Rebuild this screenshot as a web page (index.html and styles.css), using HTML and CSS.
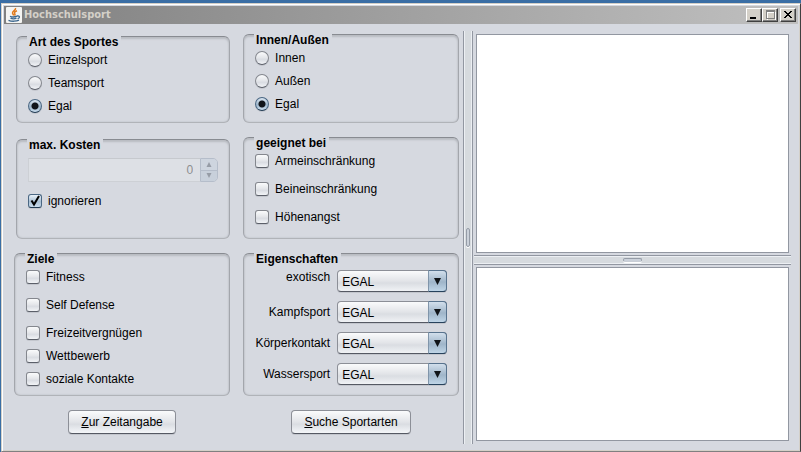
FILE: index.html
```html
<!DOCTYPE html>
<html lang="de">
<head>
<meta charset="utf-8">
<title>Hochschulsport</title>
<link rel="stylesheet" href="styles.css">
</head>
<body>
<div class="window">
  <header class="titlebar">
    <svg class="app-icon" viewBox="0 0 16 16" aria-hidden="true">
      <rect width="16" height="16" rx="1" fill="#f4f4f2"/>
      <path d="M9.500 1c1 2-3.500 3-3 5 .1.900 1 1.500 1.200 2.500M11 3.800c-2 .7-3 1.700-2.200 2.900.5.700.2 1.300-.3 1.800" fill="none" stroke="#e07a1c" stroke-width="1.500"/>
      <path d="M4 9.200c1.500.8 5 .8 7 0M4.500 11.200c1.500.7 4.500.7 6 0M2.500 13.300c3 1.300 8 1.200 10.500-.1M11 9c3-.6 3.300 1.800.6 2.700" fill="none" stroke="#3a668e" stroke-width="1.300"/>
    </svg>
    <h1 class="titlebar-text">Hochschulsport</h1>
    <div class="window-buttons">
      <button class="window-button" type="button" aria-label="Minimieren"><svg viewBox="0 0 12 10" shape-rendering="crispEdges"><path d="M2 7h6v2H2z" fill="#000"/></svg></button>
      <button class="window-button" type="button" aria-label="Maximieren" disabled><svg viewBox="0 0 12 10" shape-rendering="crispEdges"><path d="M3 2h8v8H3z" fill="none" stroke="#fff"/><path d="M2 0h9v2H2zM2 2h1v7H2zM10 2h1v7h-1zM2 8h9v1H2z" fill="#808080"/></svg></button>
      <button class="window-button window-button-close" type="button" aria-label="Schließen"><svg viewBox="0 0 12 10" shape-rendering="crispEdges"><path d="M2 1h2v1h1v1h2V2h1V1h2v1H9v1H8v1H7v1h1v1h1v1h1v1H8V7H7V6H5v1H4v1H2V7h1V6h1V5h1V4H4V3H3V2H2z" fill="#000"/></svg></button>
    </div>
  </header>

  <main class="content">
    <form class="filters">
      <fieldset class="group group-inset">
        <legend>Art des Sportes</legend>
        <div class="rows">
          <label class="choice"><input type="radio" name="art">Einzelsport</label>
          <label class="choice"><input type="radio" name="art">Teamsport</label>
          <label class="choice"><input type="radio" name="art" checked>Egal</label>
        </div>
      </fieldset>
      <fieldset class="group">
        <legend>Innen/Außen</legend>
        <div class="rows">
          <label class="choice"><input type="radio" name="ort">Innen</label>
          <label class="choice"><input type="radio" name="ort">Außen</label>
          <label class="choice"><input type="radio" name="ort" checked>Egal</label>
        </div>
      </fieldset>
      <fieldset class="group group-inset">
        <legend>max. Kosten</legend>
        <div class="rows cost">
          <div class="spinner">
            <input class="spinner-value" type="text" value="0" aria-label="max. Kosten" disabled>
            <div class="spinner-buttons">
              <button type="button" aria-label="Mehr" disabled><svg viewBox="0 0 6 5"><path d="M3 0l2.500 5h-5z"/></svg></button>
              <button type="button" aria-label="Weniger" disabled><svg viewBox="0 0 6 5"><path d="M3 5l2.500-5h-5z"/></svg></button>
            </div>
          </div>
          <label class="choice"><input type="checkbox" checked>ignorieren</label>
        </div>
      </fieldset>
      <fieldset class="group">
        <legend>geeignet bei</legend>
        <div class="rows">
          <label class="choice choice-spaced"><input type="checkbox">Armeinschränkung</label>
          <label class="choice choice-spaced"><input type="checkbox">Beineinschränkung</label>
          <label class="choice"><input type="checkbox">Höhenangst</label>
        </div>
      </fieldset>
      <fieldset class="group">
        <legend>Ziele</legend>
        <div class="rows">
          <label class="choice choice-spaced"><input type="checkbox">Fitness</label>
          <label class="choice choice-spaced"><input type="checkbox">Self Defense</label>
          <label class="choice"><input type="checkbox">Freizeitvergnügen</label>
          <label class="choice"><input type="checkbox">Wettbewerb</label>
          <label class="choice"><input type="checkbox">soziale Kontakte</label>
        </div>
      </fieldset>
      <fieldset class="group">
        <legend>Eigenschaften</legend>
        <div class="rows properties">
          <label class="label-top" for="exotisch">exotisch</label>
          <span class="combo"><select id="exotisch"><option>EGAL</option></select></span>
          <label for="kampf">Kampfsport</label>
          <span class="combo"><select id="kampf"><option>EGAL</option></select></span>
          <label for="koerper">Körperkontakt</label>
          <span class="combo"><select id="koerper"><option>EGAL</option></select></span>
          <label for="wasser">Wassersport</label>
          <span class="combo"><select id="wasser"><option>EGAL</option></select></span>
        </div>
      </fieldset>
      <button class="action" type="button"><u>Z</u>ur Zeitangabe</button>
      <button class="action" type="button"><u>S</u>uche Sportarten</button>
    </form>

    <div class="divider divider-vertical" role="separator" aria-orientation="vertical"><span class="grip"></span></div>

    <section class="results">
      <textarea class="result result-main" aria-label="Sportarten" readonly></textarea>
      <div class="divider divider-horizontal" role="separator"><span class="grip"></span></div>
      <textarea class="result result-detail" aria-label="Details" readonly></textarea>
    </section>
  </main>
</div>
</body>
</html>
```

FILE: styles.css
```css
* { box-sizing: border-box; }

body {
  margin: 0;
  min-height: 100vh;
  display: flex;
  padding: 3px 0 0 1px;
  background: #3a6ea5;
  color: #000;
  font: 12px/14px "Liberation Sans", Arial, sans-serif;
}

button, input, select, textarea { margin: 0; font: inherit; color: inherit; }

.window {
  flex: 1;
  display: flex;
  flex-direction: column;
  background: #d6d9e0;
  border: 1px solid #d4d0c8;
  border-right-color: #404040;
  border-bottom-color: #808080;
  box-shadow: inset 1px 1px #fff, inset -1px -1px #d4d0c8;
  padding: 2px 2px 1px;
}

/* Title bar */
.titlebar {
  display: flex;
  align-items: center;
  height: 18px;
  padding: 0 2px;
  background: linear-gradient(90deg, #808080, #c0c0c0);
}
.app-icon { width: 16px; height: 16px; }
.titlebar-text {
  margin: 0 auto 0 2px;
  color: #d4d0c8;
  font: bold 11px/16px "DejaVu Sans Condensed", "DejaVu Sans", sans-serif;
}
.window-buttons { display: flex; }
.window-button {
  display: flex;
  width: 16px;
  height: 14px;
  padding: 1px;
  border: 1px solid;
  border-color: #fff #404040 #404040 #fff;
  background: #d4d0c8;
  box-shadow: inset -1px -1px #808080;
}
.window-button svg { width: 12px; height: 10px; }
.window-button-close { margin-left: 2px; }

/* Main area */
.content { flex: 1; display: flex; }

.filters {
  flex: 458;
  display: grid;
  grid-template-columns: repeat(2, minmax(0, 1fr));
  grid-template-rows: 89px 102px 143px 24px;
  gap: 14px 13px;
  align-content: start;
  padding: 10px 4px 0 10px;
}

.group {
  min-width: 0;
  margin: 0;
  padding: 0 11px;
  border: 1px solid #a3a6ac;
  border-top-color: #888b91;
  border-bottom-color: #b0b3b8;
  border-radius: 6px;
  box-shadow: inset 0 2px 2px #b9bcc2, inset 0 0 2px #b4b7bd;
}
.group-inset { margin: 2px 0 0 2px; }
.group legend {
  float: left;
  margin: -1px 0 0 -1px;
  padding: 0 3px 0 2px;
  background: #d6d9e0;
  font-weight: bold;
  line-height: 12px;
}
.rows { clear: both; display: flex; flex-direction: column; }

.choice { display: flex; align-items: center; gap: 6px; height: 23px; }
.choice-spaced { margin-bottom: 5px; }
.choice input {
  appearance: none;
  width: 14px;
  height: 14px;
  border: 1px solid #84878e;
  border-bottom-color: #5b5f69;
  border-radius: 3px;
  background: linear-gradient(#fafbfc, #e3e5e9 50%, #d9dce2 60%, #f2f4f7);
  box-shadow: 0 1px #c3c6cd;
}
.choice input[type="radio"] { border-radius: 50%; }
.choice input:checked {
  border-color: #4a6783;
  border-bottom-color: #203a53;
}
.choice input[type="radio"]:checked {
  background: radial-gradient(circle, #10141a 0 3px, transparent 4px), linear-gradient(#dce7f2, #9eb6cb 55%, #c9dced);
}
.choice input[type="checkbox"]:checked {
  background: url("data:image/svg+xml,%3Csvg xmlns='http://www.w3.org/2000/svg' viewBox='0 0 12 12'%3E%3Cpath d='M2.500 5.500 5 9.500 10 1' fill='none' stroke='%23000' stroke-width='2'/%3E%3C/svg%3E"), linear-gradient(#eaf2f9, #a9bfd3 55%, #c9dced);
}

/* Cost spinner */
.cost { gap: 7px; padding-top: 7px; }
.spinner { display: flex; height: 24px; }
.spinner-value {
  flex: 1;
  min-width: 0;
  padding: 0 7px;
  border: 1px solid #cdd0d5;
  border-right: 0;
  border-top-color: #c6c9ce;
  background: #dde0e5;
  color: #8e8f91;
  text-align: right;
}
.spinner-buttons {
  display: flex;
  flex-direction: column;
  width: 18px;
  border: 1px solid #b5bdca;
  border-radius: 0 5px 5px 0;
  overflow: hidden;
}
.spinner-buttons button {
  flex: 1;
  display: flex;
  align-items: center;
  justify-content: center;
  padding: 0;
  border: 0;
  background: #ced5df;
}
.spinner-buttons button + button { border-top: 1px solid #b5bdca; background: #c8d0db; }
.spinner-buttons svg { width: 6px; height: 5px; fill: #969ca6; }

/* Combo boxes */
.properties {
  display: grid;
  grid-template-columns: 1fr 110px;
  gap: 9px 7px;
  align-items: center;
  padding-top: 5px;
  margin-left: -4px;
  text-align: right;
}
.label-top { align-self: start; }
.combo { position: relative; display: flex; height: 22px; }
.combo select {
  appearance: none;
  width: 100%;
  padding: 1px 4px 0;
  border: 1px solid #8c8f97;
  border-bottom-color: #555963;
  border-radius: 4px;
  background: linear-gradient(#fafbfc, #e2e4e8 50%, #dadde2 60%, #f0f2f5);
  box-shadow: 0 1px #c3c6cd;
}
.combo::after {
  content: "";
  position: absolute;
  inset: 0 0 0 auto;
  width: 17px;
  border: 1px solid #58738e;
  border-left-color: #8095aa;
  border-bottom-color: #26425c;
  border-radius: 0 4px 4px 0;
  background: url("data:image/svg+xml,%3Csvg xmlns='http://www.w3.org/2000/svg' width='7' height='7'%3E%3Cpath d='M0 0h7L3.500 7z' fill='%23101418'/%3E%3C/svg%3E") center / 7px 7px no-repeat, linear-gradient(#d2dfec, #9fb5c9 55%, #bfd5e7);
  pointer-events: none;
}

.action {
  justify-self: center;
  padding: 0 12px;
  border: 1px solid #8c8f97;
  border-bottom-color: #555963;
  border-radius: 4px;
  background: linear-gradient(#fafbfc, #e2e4e8 50%, #dadde2 60%, #f4f6f9);
  box-shadow: 0 1px #c3c6cd;
}

/* Split panes */
.divider { display: flex; align-items: center; justify-content: center; background: #d6dade; }
.divider-vertical {
  width: 10px;
  margin: 7px 0 6px;
  border: solid #9297a1;
  border-width: 0 1px;
  box-shadow: inset 1px 0 #eceff3, inset -1px 0 #eceff3;
}
.divider-horizontal {
  height: 10px;
  margin: 2px 0;
  border: solid #9297a1;
  border-width: 1px 0;
  box-shadow: inset 0 1px #eceff3, inset 0 -1px #eceff3;
}
.grip { border: 1px solid #959ca7; border-radius: 2px; background: #cbd1da; box-shadow: 0 1px #fff; }
.divider-vertical .grip { width: 4px; height: 19px; }
.divider-horizontal .grip { width: 19px; height: 4px; border-bottom-color: #c9ced6; }

.results {
  flex: 326;
  display: flex;
  flex-direction: column;
  margin: 7px 7px 6px 1px;
  padding: 3px 0;
}
.result {
  display: block;
  min-height: 0;
  margin: 0 2px;
  padding: 4px;
  border: 1px solid #9297a1;
  border-radius: 0;
  background: #fff;
  resize: none;
}
.result-main { flex: 221; }
.result-detail { flex: 173; }
```
